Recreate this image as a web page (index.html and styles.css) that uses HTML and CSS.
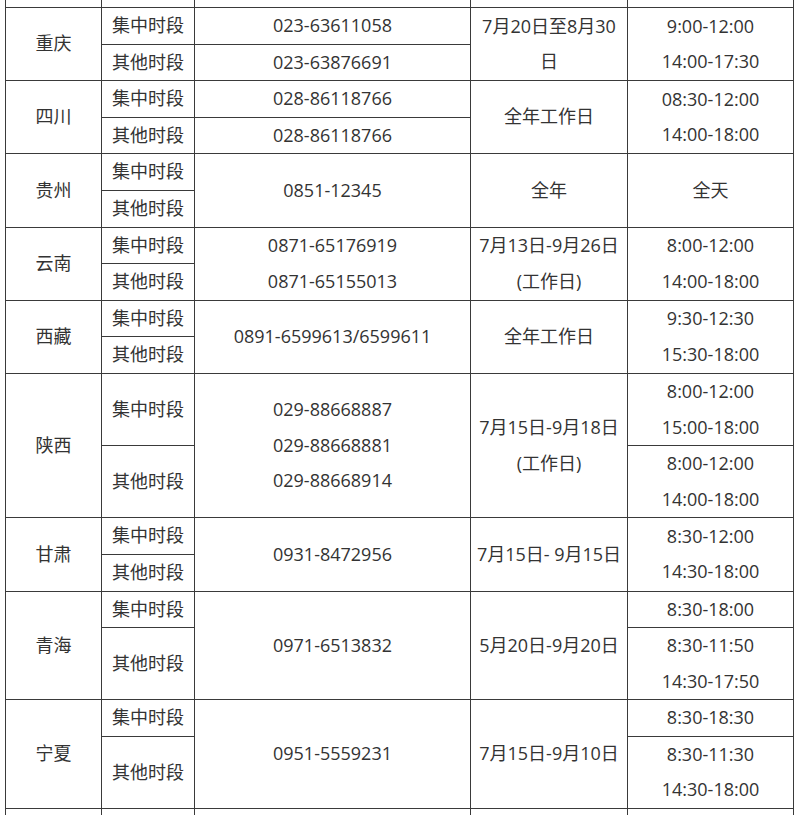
FILE: index.html
```html
<!DOCTYPE html>
<html lang="zh-CN">
<head>
<meta charset="utf-8">
<title>咨询电话</title>
<link rel="stylesheet" href="styles.css">
</head>
<body>
<table class="hotline">
  <colgroup>
    <col class="c-prov"><col class="c-period"><col class="c-phone"><col class="c-date"><col class="c-time">
  </colgroup>
  <tbody>
    <tr class="spacer"><td></td><td></td><td></td><td></td><td></td></tr>

    <tr><td rowspan="2">重庆</td><td>集中时段</td><td>023-63611058</td><td rowspan="2">7月20日至8月30日</td><td rowspan="2">9:00-12:00<br>14:00-17:30</td></tr>
    <tr><td>其他时段</td><td>023-63876691</td></tr>

    <tr><td rowspan="2">四川</td><td>集中时段</td><td>028-86118766</td><td rowspan="2">全年工作日</td><td rowspan="2">08:30-12:00<br>14:00-18:00</td></tr>
    <tr><td>其他时段</td><td>028-86118766</td></tr>

    <tr><td rowspan="2">贵州</td><td>集中时段</td><td rowspan="2">0851-12345</td><td rowspan="2">全年</td><td rowspan="2">全天</td></tr>
    <tr><td>其他时段</td></tr>

    <tr><td rowspan="2">云南</td><td>集中时段</td><td rowspan="2">0871-65176919<br>0871-65155013</td><td rowspan="2">7月13日-9月26日<br>(工作日)</td><td rowspan="2">8:00-12:00<br>14:00-18:00</td></tr>
    <tr><td>其他时段</td></tr>

    <tr><td rowspan="2">西藏</td><td>集中时段</td><td rowspan="2">0891-6599613/6599611</td><td rowspan="2">全年工作日</td><td rowspan="2">9:30-12:30<br>15:30-18:00</td></tr>
    <tr><td>其他时段</td></tr>

    <tr><td rowspan="2">陕西</td><td>集中时段</td><td rowspan="2">029-88668887<br>029-88668881<br>029-88668914</td><td rowspan="2">7月15日-9月18日<br>(工作日)</td><td>8:00-12:00<br>15:00-18:00</td></tr>
    <tr><td>其他时段</td><td>8:00-12:00<br>14:00-18:00</td></tr>

    <tr><td rowspan="2">甘肃</td><td>集中时段</td><td rowspan="2">0931-8472956</td><td rowspan="2">7月15日- 9月15日</td><td rowspan="2">8:30-12:00<br>14:30-18:00</td></tr>
    <tr><td>其他时段</td></tr>

    <tr><td rowspan="2">青海</td><td>集中时段</td><td rowspan="2">0971-6513832</td><td rowspan="2">5月20日-9月20日</td><td>8:30-18:00</td></tr>
    <tr><td>其他时段</td><td>8:30-11:50<br>14:30-17:50</td></tr>

    <tr><td rowspan="2">宁夏</td><td>集中时段</td><td rowspan="2">0951-5559231</td><td rowspan="2">7月15日-9月10日</td><td>8:30-18:30</td></tr>
    <tr><td>其他时段</td><td>8:30-11:30<br>14:30-18:00</td></tr>

    <tr class="tail"><td></td><td></td><td></td><td></td><td></td></tr>
  </tbody>
</table>
</body>
</html>
```
FILE: styles.css
```css
html, body {
  margin: 0;
  padding: 0;
  background: #fff;
}

body {
  overflow: hidden;
}

.hotline {
  margin-left: 5px;
  width: 789px;
  table-layout: fixed;
  border-collapse: collapse;
  font-family: "Open Sans", "Noto Sans CJK SC", sans-serif;
  font-size: 18px;
  line-height: 35.6px;
  color: #333;
}

.c-prov { width: 96px; }
.c-period { width: 93px; }
.c-phone { width: 276px; }
.c-date { width: 157px; }
.c-time { width: 166px; }

.hotline td {
  border: 1px solid #3a3a3a;
  padding: 0 3px;
  text-align: center;
  vertical-align: middle;
}

.hotline .spacer td {
  border-top: hidden;
  height: 7px;
  line-height: 0;
  padding: 0;
}

.hotline .tail td {
  border-bottom: hidden;
  height: 36px;
}
```
